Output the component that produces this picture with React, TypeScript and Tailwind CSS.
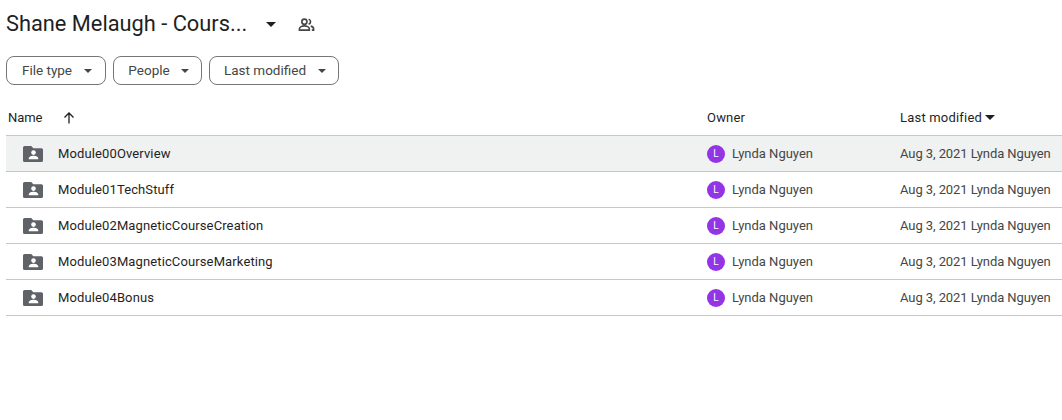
const modules = [
  "Module00Overview",
  "Module01TechStuff",
  "Module02MagneticCourseCreation",
  "Module03MagneticCourseMarketing",
  "Module04Bonus",
];

const Caret = ({ className }: { className: string }) => (
  <svg viewBox="0 0 10 5" className={className} fill="currentColor">
    <path d="M0 0l5 5 5-5z" />
  </svg>
);

const SharedFolderIcon = () => (
  <svg width="20" height="18" viewBox="0 0 20 18" className="text-[#5f6368]" fill="currentColor">
    <path d="M1.500 1h6.800l2 2.300h8.200a1.500 1.500 0 0 1 1.500 1.500v10.700a1.500 1.500 0 0 1-1.500 1.500h-17A1.500 1.500 0 0 1 0 15.500v-13A1.500 1.500 0 0 1 1.500 1z" />
    <circle cx="10.500" cy="7.600" r="2.300" fill="#ffffff" />
    <path d="M5.800 13.300c0-1.700 3-2.500 4.700-2.500s4.700.8 4.700 2.500v.9H5.800z" fill="#ffffff" />
  </svg>
);

const SharedIcon = () => (
  <svg width="17" height="17" viewBox="0 0 24 24" fill="none" stroke="#444746" strokeWidth="2.300">
    <circle cx="9" cy="8" r="3.600" />
    <path d="M2 20v-2c0-2.500 4-4 7-4s7 1.500 7 4v2z" />
    <path d="M15 4.500a3.600 3.600 0 0 1 0 7M18 14.300c2.400.7 4 1.900 4 3.700v2h-2.500" />
  </svg>
);

const FilterChip = ({ label, width, gap }: { label: string; width: string; gap: string }) => (
  <button className={`flex h-[29px] items-center justify-center rounded-lg border border-[#747775] pl-[2px] text-[13.500px] text-[#444746] ${width} ${gap}`}>
    {label}
    <Caret className="h-[4px] w-[8px]" />
  </button>
);

const App = () => {
  return (
    <div className="h-[420px] w-[1062px] overflow-hidden bg-white font-['Roboto',sans-serif]">
      <div className="flex h-[48px] items-center pl-[6px]">
        <span className="w-[260px] text-[21.800px] text-[#1f1f1f]">Shane Melaugh - Cours...</span>
        <Caret className="h-[5px] w-[10px] text-[#1f1f1f]" />
        <span className="ml-[22px]">
          <SharedIcon />
        </span>
      </div>

      <div className="mt-[8px] flex gap-[7px] pl-[6px]">
        <FilterChip label="File type" width="w-[100px]" gap="gap-[12px]" />
        <FilterChip label="People" width="w-[89px]" gap="gap-[11px]" />
        <FilterChip label="Last modified" width="w-[130px]" gap="gap-[12px]" />
      </div>

      <div className="ml-[6px] mt-[15px] flex h-[36px] items-center border-b border-[#c7c7c7] pl-[2px] text-[13px] text-[#1f1f1f]">
        <span className="w-[54px] tracking-[-0.1px]">Name</span>
        <svg width="14" height="14" viewBox="0 0 14 14" fill="none" stroke="#1f1f1f" strokeWidth="1.300">
          <path d="M7 12.500V2M2.500 6.500L7 2l4.500 4.500" />
        </svg>
        <span className="ml-[631px] w-[193px] tracking-[0.2px]">Owner</span>
        <span className="flex items-center gap-[3px] tracking-[0.2px]">
          Last modified
          <Caret className="h-[5px] w-[10px]" />
        </span>
      </div>

      <div className="ml-[6px]">
        {modules.map((name, i) => (
          <div
            key={name}
            className={`flex h-[36px] items-center border-b border-[#c7c7c7] text-[13px] ${i === 0 ? "bg-[#f0f1f1]" : ""}`}
          >
            <div className="flex w-[701px] items-center pl-[17px]">
              <SharedFolderIcon />
              <span className="ml-[15px] tracking-[0.12px] text-[#1f1f1f]">{name}</span>
            </div>
            <div className="flex w-[193px] items-center text-[#444746]">
              <span className="flex h-[18px] w-[18px] items-center justify-center rounded-full bg-[#9334e6] text-[10px] text-white">
                L
              </span>
              <span className="ml-[7px]">Lynda Nguyen</span>
            </div>
            <span className="whitespace-nowrap tracking-[-0.08px] text-[#444746]">Aug 3, 2021 Lynda Nguyen</span>
          </div>
        ))}
      </div>
    </div>
  );
};

export default App;
